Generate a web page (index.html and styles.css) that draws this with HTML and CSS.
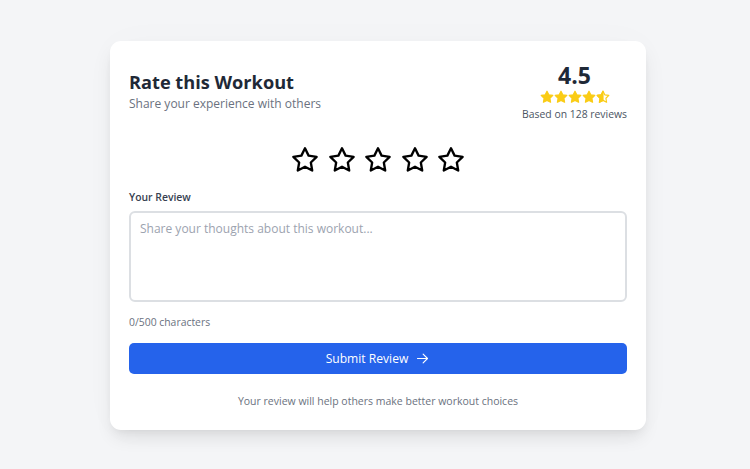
FILE: index.html
```html
<!DOCTYPE html>
<html lang="en">
<head>
<meta charset="utf-8">
<title>Rate this Workout</title>
<link rel="stylesheet" href="styles.css">
</head>
<body>
<main class="page">
  <section class="card">
    <header class="head">
      <div class="head-text">
        <h1 class="title">Rate this Workout</h1>
        <p class="subtitle">Share your experience with others</p>
      </div>
      <div class="summary">
        <div class="score">4.5</div>
        <div class="mini-stars">
          <svg viewBox="0 0 24 24" class="mini"><polygon class="full" points="12 2 15.09 8.26 22 9.27 17 14.14 18.18 21.02 12 17.77 5.82 21.02 7 14.14 2 9.27 8.91 8.26 12 2"/></svg>
          <svg viewBox="0 0 24 24" class="mini"><polygon class="full" points="12 2 15.09 8.26 22 9.27 17 14.14 18.18 21.02 12 17.77 5.82 21.02 7 14.14 2 9.27 8.91 8.26 12 2"/></svg>
          <svg viewBox="0 0 24 24" class="mini"><polygon class="full" points="12 2 15.09 8.26 22 9.27 17 14.14 18.18 21.02 12 17.77 5.82 21.02 7 14.14 2 9.27 8.91 8.26 12 2"/></svg>
          <svg viewBox="0 0 24 24" class="mini"><polygon class="full" points="12 2 15.09 8.26 22 9.27 17 14.14 18.18 21.02 12 17.77 5.82 21.02 7 14.14 2 9.27 8.91 8.26 12 2"/></svg>
          <svg viewBox="0 0 24 24" class="mini"><polygon class="empty" points="12 2 15.09 8.26 22 9.27 17 14.14 18.18 21.02 12 17.77 5.82 21.02 7 14.14 2 9.27 8.91 8.26 12 2"/><polygon class="full" points="12 2 12 17.77 5.82 21.02 7 14.14 2 9.27 8.91 8.26 12 2"/></svg>
        </div>
        <div class="based">Based on 128 reviews</div>
      </div>
    </header>

    <div class="stars">
      <svg viewBox="0 0 24 24" class="big"><polygon points="12 2 15.09 8.26 22 9.27 17 14.14 18.18 21.02 12 17.77 5.82 21.02 7 14.14 2 9.27 8.91 8.26 12 2"/></svg>
      <svg viewBox="0 0 24 24" class="big"><polygon points="12 2 15.09 8.26 22 9.27 17 14.14 18.18 21.02 12 17.77 5.82 21.02 7 14.14 2 9.27 8.91 8.26 12 2"/></svg>
      <svg viewBox="0 0 24 24" class="big"><polygon points="12 2 15.09 8.26 22 9.27 17 14.14 18.18 21.02 12 17.77 5.82 21.02 7 14.14 2 9.27 8.91 8.26 12 2"/></svg>
      <svg viewBox="0 0 24 24" class="big"><polygon points="12 2 15.09 8.26 22 9.27 17 14.14 18.18 21.02 12 17.77 5.82 21.02 7 14.14 2 9.27 8.91 8.26 12 2"/></svg>
      <svg viewBox="0 0 24 24" class="big"><polygon points="12 2 15.09 8.26 22 9.27 17 14.14 18.18 21.02 12 17.77 5.82 21.02 7 14.14 2 9.27 8.91 8.26 12 2"/></svg>
    </div>

    <label class="label" for="review">Your Review</label>
    <textarea id="review" class="review" placeholder="Share your thoughts about this workout..."></textarea>
    <div class="count">0/500 characters</div>

    <button class="submit" type="button">
      <span>Submit Review</span>
      <svg viewBox="0 0 24 24" class="arrow"><path d="M4 12h16"/><path d="m13 5 7 7-7 7"/></svg>
    </button>

    <p class="note">Your review will help others make better workout choices</p>
  </section>
</main>
</body>
</html>
```

FILE: styles.css
```css
* { box-sizing: border-box; }

html, body {
  margin: 0;
  padding: 0;
}

body {
  background: #f4f5f7;
  font-family: "Open Sans", "Noto Sans", sans-serif;
  color: #1f2937;
}

.page {
  display: flex;
  justify-content: center;
  padding-top: 41px;
  padding-left: 6px;
  height: 469px;
}

.card {
  width: 536px;
  height: 389px;
  background: #ffffff;
  border-radius: 11px;
  padding: 20px 19px 21px 19px;
  box-shadow: 0 10px 18px -3px rgba(0, 0, 0, 0.09), 0 4px 8px -4px rgba(0, 0, 0, 0.08), 0 0 40px rgba(0,0,0,0.02);
  display: flex;
  flex-direction: column;
}

.head {
  display: flex;
  justify-content: space-between;
  align-items: center;
}

.title {
  margin: 0;
  font-size: 18.2px;
  line-height: 24px;
  font-weight: 700;
  color: #1f2937;
}

.subtitle {
  margin: 0;
  font-size: 12px;
  line-height: 20px;
  color: #6b7280;
}

.summary {
  display: flex;
  flex-direction: column;
  align-items: center;
}

.score {
  font-size: 23px;
  line-height: 28px;
  font-weight: 700;
  color: #1f2937;
}

.mini-stars {
  display: flex;
  height: 13px;
  margin-top: 1px;
}

.mini {
  width: 14px;
  height: 14px;
}

.mini .full {
  fill: #facc15;
  stroke: #facc15;
  stroke-width: 2;
  stroke-linejoin: round;
}

.mini .empty {
  fill: none;
  stroke: #facc15;
  stroke-width: 2;
  stroke-linejoin: round;
}

.based {
  margin-top: 3px;
  font-size: 10.4px;
  line-height: 16px;
  color: #4b5563;
}

.stars {
  display: flex;
  justify-content: center;
  gap: 8.5px;
  margin-top: 24px;
  margin-bottom: 15px;
}

.big {
  width: 28px;
  height: 28px;
  fill: none;
  stroke: #000000;
  stroke-width: 2;
  stroke-linejoin: round;
  stroke-linecap: round;
}

.label {
  font-size: 10.4px;
  line-height: 16px;
  font-weight: 600;
  color: #374151;
  margin-bottom: 6px;
}

.review {
  width: 100%;
  height: 92px;
  border: 2px solid #dcdfe3;
  border-radius: 6px;
  padding: 6px 9px;
  font-family: inherit;
  font-size: 12px;
  line-height: 20px;
  color: #1f2937;
  resize: none;
  outline: none;
}

.review::placeholder {
  color: #9ca3af;
}

.count {
  margin-top: 12px;
  font-size: 10.4px;
  line-height: 16px;
  color: #6b7280;
}

.submit {
  margin-top: 13px;
  height: 31px;
  width: 100%;
  border: none;
  border-radius: 5px;
  background: #2563eb;
  color: #ffffff;
  font-family: inherit;
  font-size: 12.1px;
  display: flex;
  align-items: center;
  justify-content: center;
  gap: 7px;
  cursor: pointer;
}

.arrow {
  width: 15px;
  height: 15px;
  fill: none;
  stroke: #ffffff;
  stroke-width: 1.8;
  stroke-linecap: round;
  stroke-linejoin: round;
}

.note {
  margin: 19px 0 0 0;
  text-align: center;
  font-size: 10.5px;
  line-height: 16px;
  color: #6b7280;
}
```
